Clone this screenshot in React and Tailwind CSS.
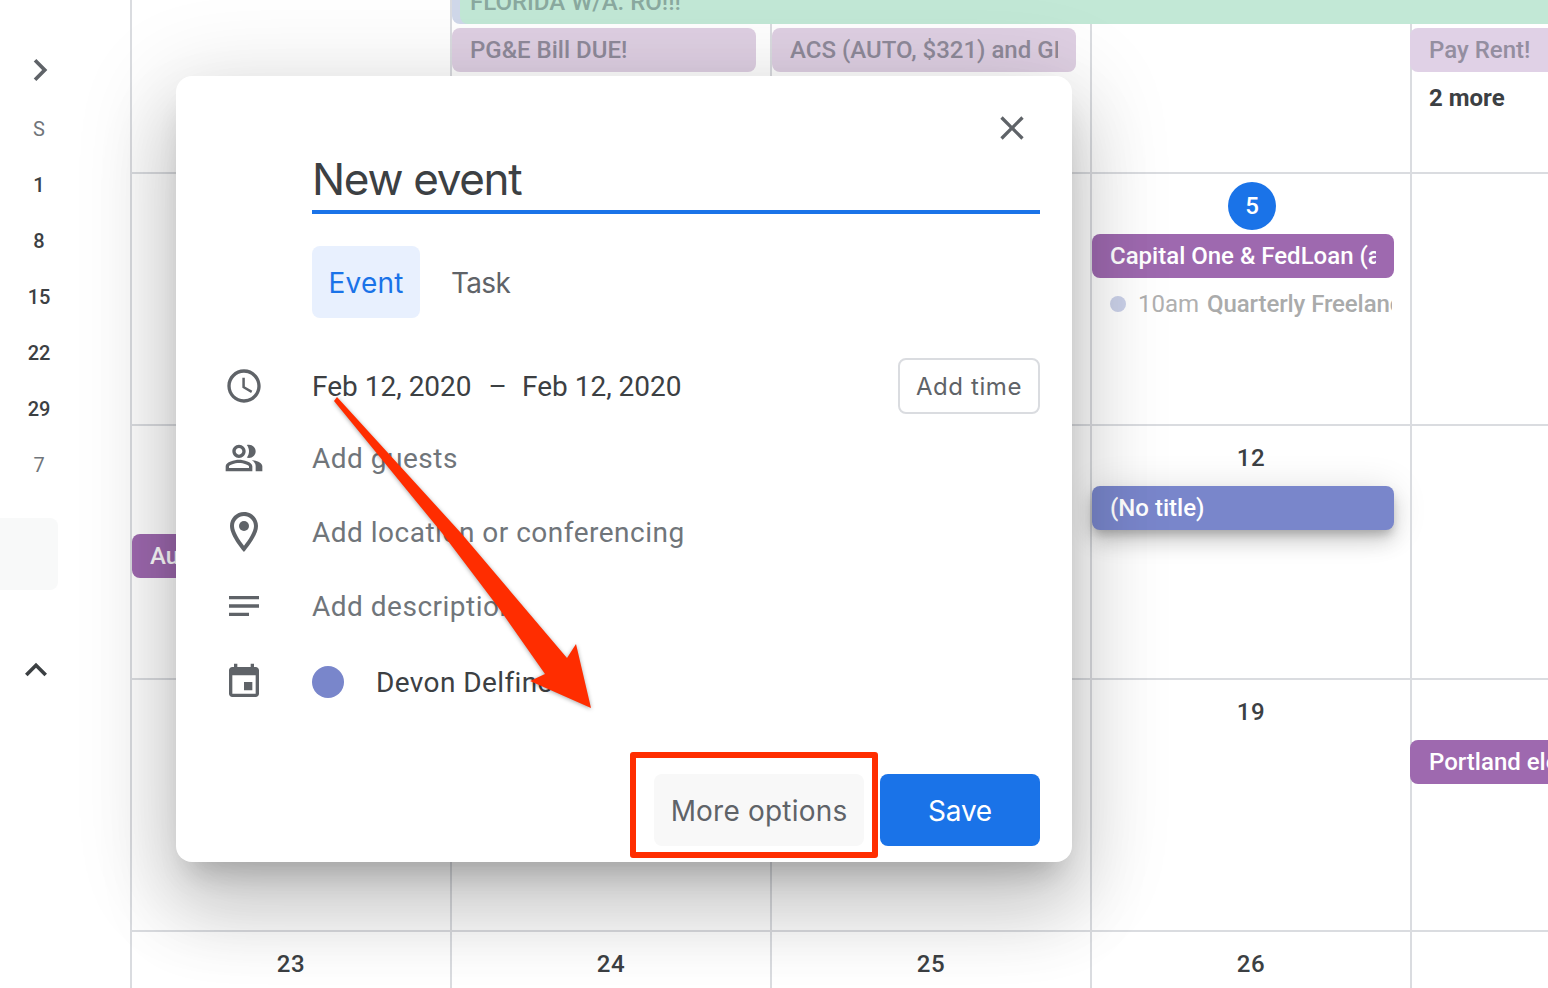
const ROBOTO = "font-['Roboto',sans-serif]"

const Icon = ({ size = 40, className = "", children }) => (
  <svg width={size} height={size} viewBox="0 0 24 24" fill="currentColor" className={`shrink-0 ${className}`}>
    {children}
  </svg>
)

const ClockIcon = () => (
  <Icon>
    <path d="M11.99 2C6.47 2 2 6.48 2 12s4.47 10 9.99 10C17.52 22 22 17.52 22 12S17.52 2 11.99 2zM12 20c-4.42 0-8-3.58-8-8s3.58-8 8-8 8 3.58 8 8-3.58 8-8 8zm.5-13H11v6l5.25 3.15.75-1.23-4.5-2.67z" />
  </Icon>
)

const PeopleIcon = () => (
  <Icon>
    <path d="M16.67 13.13C18.04 14.06 19 15.32 19 17v3h4v-3c0-2.18-3.57-3.47-6.33-3.87z" />
    <path d="M15 12c2.21 0 4-1.79 4-4s-1.79-4-4-4c-.47 0-.91.1-1.33.24C14.5 5.27 15 6.58 15 8s-.5 2.73-1.33 3.76c.42.14.86.24 1.33.24z" />
    <path d="M9 12c2.21 0 4-1.79 4-4s-1.79-4-4-4-4 1.79-4 4 1.79 4 4 4zm0-6c1.1 0 2 .9 2 2s-.9 2-2 2-2-.9-2-2 .9-2 2-2z" />
    <path d="M9 13c-2.67 0-8 1.34-8 4v3h16v-3c0-2.66-5.33-4-8-4zm6 5H3v-.99C3.2 16.29 6.3 15 9 15s5.8 1.29 6 2v1z" />
  </Icon>
)

const PinIcon = () => (
  <Icon size={48}>
    <path d="M12 2C8.13 2 5 5.13 5 9c0 5.25 7 13 7 13s7-7.75 7-13c0-3.87-3.13-7-7-7zM7 9c0-2.76 2.24-5 5-5s5 2.24 5 5c0 2.88-2.88 7.19-5 9.88C9.92 16.21 7 11.85 7 9z" />
    <circle cx="12" cy="9" r="2.5" />
  </Icon>
)

const NotesIcon = () => (
  <Icon>
    <path d="M3 18h12v-2H3v2zM3 6v2h18V6H3zm0 7h18v-2H3v2z" />
  </Icon>
)

const CalendarIcon = () => (
  <Icon>
    <path d="M17 12h-5v5h5v-5zM16 1v2H8V1H6v2H5c-1.11 0-1.99.9-1.99 2L3 19c0 1.1.89 2 2 2h14c1.1 0 2-.9 2-2V5c0-1.1-.9-2-2-2h-1V1h-2zm3 18H5V8h14v11z" />
  </Icon>
)

// chip text gets clipped inside the padding, same as the real calendar
const Chip = ({ className = "", children }) => (
  <div className={`h-11 rounded-lg px-[18px] flex items-center text-2xl font-medium ${className}`}>
    <span className="block w-full overflow-hidden whitespace-nowrap">{children}</span>
  </div>
)

const DateLabel = ({ children }) => (
  <div className="h-12 mb-1 flex items-center justify-center text-2xl font-medium text-[#3c4043] tracking-[0.5px]">
    {children}
  </div>
)

const Cell = ({ className = "", children }) => (
  <div className={`border-l-2 border-[#dadce0] pt-2 min-w-0 ${className}`}>{children}</div>
)

const Week = ({ className = "", children }) => (
  <div className={`shrink-0 grid grid-cols-[320px_320px_320px_320px_138px] border-b-2 border-[#dadce0] ${className}`}>{children}</div>
)

const Sidebar = () => (
  <div className="w-[130px] shrink-0 pt-12 flex flex-col">
    <Icon size={44} className="ml-[18px] text-[#5f6368]">
      <path d="M10 6L8.59 7.41 13.17 12l-4.58 4.59L10 18l6-6z" />
    </Icon>
    <div className="w-[78px] mt-[9px] flex flex-col text-xl font-medium text-[#3c4043]">
      <div className="h-14 flex items-center justify-center text-[#70757a] font-normal">S</div>
      <div className="h-14 flex items-center justify-center">1</div>
      <div className="h-14 flex items-center justify-center">8</div>
      <div className="h-14 flex items-center justify-center">15</div>
      <div className="h-14 flex items-center justify-center">22</div>
      <div className="h-14 flex items-center justify-center">29</div>
      <div className="h-14 flex items-center justify-center text-[#70757a] font-normal">7</div>
    </div>
    <div className="w-[58px] h-[72px] mt-[25px] rounded-r-lg bg-[#f8f9f9]" />
    <Icon size={44} className="ml-[14px] mt-[58px] text-[#3c4043]">
      <path d="M12 8l-6 6 1.41 1.41L12 10.83l4.59 4.58L18 14z" />
    </Icon>
  </div>
)

const Calendar = () => (
  <div className="flex-1 flex flex-col min-w-0">
    <Week className="h-[174px] grid-rows-[24px_48px_1fr]">
      <div className="col-start-1 row-start-1 row-span-3 border-l-2 border-[#dadce0]" />
      <div className="col-start-2 row-start-1 row-span-3 border-l-2 border-[#dadce0]" />
      <div className="col-start-3 row-start-1 row-span-3 border-l-2 border-[#dadce0]" />
      <div className="col-start-4 row-start-1 row-span-3 border-l-2 border-[#dadce0]" />
      <div className="col-start-5 row-start-1 row-span-3 border-l-2 border-[#dadce0]" />

      <div className="col-start-2 col-span-4 row-start-1 ml-0.5 h-6 bg-[#d0d8ea] rounded-bl-lg">
        <div className="ml-2 h-6 pl-2.5 bg-[#c2e8d6] rounded-bl-lg overflow-hidden flex items-end text-2xl font-medium text-[#8aa99f] whitespace-nowrap">
          <span className="leading-[44px]">FLORIDA W/A. RO!!!</span>
        </div>
      </div>
      <div className="col-start-2 row-start-2 ml-0.5 mr-3.5 pt-1">
        <Chip className="bg-[#dfd0e3] text-[#8f8a9a]">PG&amp;E Bill DUE!</Chip>
      </div>
      <div className="col-start-3 row-start-2 ml-0.5 mr-3.5 pt-1">
        <Chip className="bg-[#dfd0e3] text-[#8f8a9a]">ACS (AUTO, $321) and GI</Chip>
      </div>
      <div className="col-start-5 row-start-2 pt-1 -mr-6">
        <Chip className="bg-[#e0d1e6] text-[#948ea0]"><span className="pl-px">Pay Rent!</span></Chip>
      </div>
      <div className="col-start-5 row-start-3 pl-[19px] pt-1 h-12 flex items-center text-2xl font-bold text-[#3c4043]">
        2 more
      </div>
    </Week>

    <Week className="h-[252px]">
      <Cell />
      <Cell />
      <Cell />
      <Cell>
        <div className="h-12 mb-1 pl-0.5 flex justify-center">
          <div className="w-12 h-12 rounded-full bg-[#1a73e8] text-white text-2xl font-medium flex items-center justify-center">5</div>
        </div>
        <Chip className="mr-4 bg-[#9e69af] text-white">Capital One &amp; FedLoan (auto)</Chip>
        <div className="mt-1 mr-[18px] h-11 pl-[18px] flex items-center text-2xl whitespace-nowrap overflow-hidden">
          <span className="w-4 h-4 rounded-full bg-[#cbd1e9] mr-3 shrink-0" />
          <span className="text-[#b0b0b0]">10am</span>
          <span className="ml-2 font-medium text-[#aaabab] tracking-[-0.1px]">Quarterly Freelance</span>
        </div>
      </Cell>
      <Cell />
    </Week>

    <Week className="h-[254px]">
      <Cell>
        <div className="h-12 mb-1" />
        <div className="h-11 mb-1" />
        <Chip className="mr-4 bg-[#9e69af] text-white">Au</Chip>
      </Cell>
      <Cell />
      <Cell />
      <Cell>
        <DateLabel>12</DateLabel>
        <Chip className="mr-4 bg-[#7986cb] text-white shadow-[0_12px_20px_0_rgba(0,0,0,0.14),0_2px_36px_0_rgba(0,0,0,0.12),0_6px_10px_-2px_rgba(0,0,0,0.2)]">(No title)</Chip>
      </Cell>
      <Cell />
    </Week>

    <Week className="h-[252px]">
      <Cell />
      <Cell />
      <Cell />
      <Cell>
        <DateLabel>19</DateLabel>
      </Cell>
      <Cell>
        <div className="h-12 mb-1" />
        <div className="-ml-0.5 -mr-6">
          <Chip className="bg-[#9e69af] text-white"><span className="pl-px">Portland elections</span></Chip>
        </div>
      </Cell>
    </Week>

    <div className="grid grid-cols-[320px_320px_320px_320px_138px] flex-1">
      <Cell><DateLabel>23</DateLabel></Cell>
      <Cell><DateLabel>24</DateLabel></Cell>
      <Cell><DateLabel>25</DateLabel></Cell>
      <Cell><DateLabel>26</DateLabel></Cell>
      <Cell />
    </div>
  </div>
)

const Row = ({ icon, className = "", children }) => (
  <div className={`h-[72px] flex items-center ${className}`}>
    <div className="w-[136px] shrink-0 px-11 flex justify-center text-[#5f6368]">{icon}</div>
    {children}
  </div>
)

const EventModal = () => (
  <div className="absolute left-[176px] top-[76px] w-[896px] h-[786px] rounded-2xl bg-white flex flex-col shadow-[0_48px_76px_6px_rgba(0,0,0,0.14),0_18px_92px_16px_rgba(0,0,0,0.12),0_22px_30px_-14px_rgba(0,0,0,0.2)]">
    <div className="pt-8 pr-10 flex justify-end text-[#5f6368]">
      <Icon>
        <path d="M19 6.41L17.59 5 12 10.59 6.41 5 5 6.41 10.59 12 5 17.59 6.41 19 12 13.41 17.59 19 19 17.59 13.41 12z" />
      </Icon>
    </div>

    <div className="ml-[136px] mr-8 h-[66px] border-b-4 border-[#1a73e8] flex items-end text-[44px] leading-[62px] text-[#3c4043] font-['Inter',sans-serif] tracking-[-1.3px]">
      New event
    </div>

    <div className="ml-[136px] mt-8 flex text-[28px] font-['Inter',sans-serif]">
      <div className="w-[108px] h-[72px] pt-0.5 rounded-lg bg-[#e8f0fe] text-[#1a73e8] tracking-[0.2px] flex items-center justify-center">Event</div>
      <div className="ml-[15px] px-4 h-[72px] pt-0.5 text-[#5f6368] tracking-[-0.7px] flex items-center">Task</div>
    </div>

    <div className="mt-8 text-[28px]">
      <Row icon={<ClockIcon />} className="pr-8 text-[#3c4043]">
        <span className="pt-0.5">Feb 12, 2020</span>
        <span className="pt-0.5 ml-[17px] mr-[15px]">–</span>
        <span className="pt-0.5">Feb 12, 2020</span>
        <div className="ml-auto w-[142px] h-14 pt-0.5 rounded-lg border-2 border-[#dadce0] flex items-center justify-center text-[24px] text-[#5f6368] font-['Inter',sans-serif] tracking-[0.6px]">
          Add time
        </div>
      </Row>
      <Row icon={<PeopleIcon />} className="text-[#70757a] tracking-[0.5px]">
        <span className="pt-0.5">Add guests</span>
      </Row>
      <Row icon={<PinIcon />} className="mt-0.5 text-[#70757a] tracking-[0.5px]">
        <span className="pt-0.5">Add location or conferencing</span>
      </Row>
      <Row icon={<NotesIcon />} className="mt-0.5 text-[#70757a] tracking-[0.5px]">
        <span className="pt-0.5">Add description</span>
      </Row>
      <Row icon={<CalendarIcon />} className="mt-1 text-[#3c4043] tracking-[0.4px]">
        <span className="w-8 h-8 rounded-full bg-[#7986cb] mr-8" />
        <span className="pt-0.5">Devon Delfino</span>
      </Row>
    </div>

    <div className="mt-14 pr-8 flex justify-end gap-4 text-[28px] font-['Inter',sans-serif]">
      <div className="w-[210px] h-[72px] pt-0.5 rounded-lg bg-[#f8f8f8] text-[#5f6368] tracking-[0.2px] flex items-center justify-center">More options</div>
      <div className="w-40 h-[72px] pt-0.5 rounded-lg bg-[#1a73e8] text-white tracking-[-0.2px] flex items-center justify-center">Save</div>
    </div>

    {/* red annotation box over the button */}
    <div className="absolute left-[454px] top-[676px] w-[248px] h-[106px] border-[6px] border-[#ff2d00] rounded-[3px]" />
  </div>
)

const App = () => (
  <div className={`relative w-[1548px] h-[988px] overflow-hidden bg-white flex ${ROBOTO}`}>
    <Sidebar />
    <Calendar />
    <EventModal />
    {/* red annotation arrow */}
    <svg className="absolute inset-0 drop-shadow-[0_1px_2px_rgba(0,0,0,0.35)]" width="1548" height="988" viewBox="0 0 1548 988">
      <polygon fill="#ff2d00" points="334,401 337,397 461,533 567,658 576,644 591,708 530,681 545,674 498,607 442,533" />
    </svg>
  </div>
)

export default App
